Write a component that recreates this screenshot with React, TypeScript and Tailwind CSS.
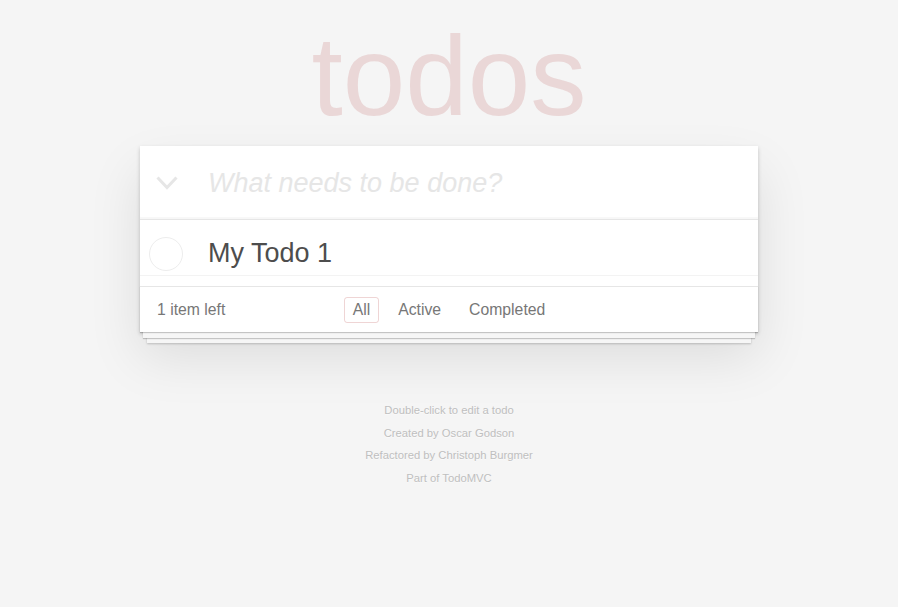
import React from "react";

const filters = ["All", "Active", "Completed"];

const App = () => {
    return (
        <div className="min-h-screen bg-[#f5f5f5] text-[#4d4d4d] font-[family-name:'Liberation_Sans',Arial,sans-serif]">
            <div className="w-[618px] mx-auto">
                {/* Title */}
                <h1 className="pt-[20px] mb-[14px] text-center text-[112.5px] leading-[112px] font-normal text-[rgba(175,47,47,0.15)]">
                    todos
                </h1>

                {/* Card */}
                <section className="bg-white shadow-[0_2px_4px_0_rgba(0,0,0,0.2),0_25px_50px_0_rgba(0,0,0,0.1)]">
                    {/* New todo */}
                    <header className="h-[73px] flex items-center shadow-[inset_0_-2px_1px_rgba(0,0,0,0.03)]">
                        <div className="w-[68px] pl-[16px] flex items-center">
                            <svg width="22" height="14" viewBox="0 0 22 14">
                                <polyline
                                    points="1.5,1.5 11,11.5 20.5,1.5"
                                    fill="none"
                                    stroke="#e6e6e6"
                                    strokeWidth="3"
                                />
                            </svg>
                        </div>
                        <input
                            className="flex-grow min-w-0 bg-transparent outline-none text-[27px] leading-[38px] italic text-[#4d4d4d] placeholder:text-[#e6e6e6] placeholder:italic"
                            placeholder="What needs to be done?"
                        />
                    </header>

                    {/* List */}
                    <div className="border-t border-[#e6e6e6]">
                        <div className="h-[56px] flex items-start pt-[17px] pl-[9px] border-b border-[#f3f3f3]">
                            <div className="w-[34px] h-[34px] rounded-full border border-[#ededed] flex-shrink-0" />
                            <span className="ml-[25px] text-[27px] leading-[32px] text-[#4d4d4d]">
                                My Todo 1
                            </span>
                        </div>
                        <div className="h-[10px]" />
                    </div>

                    {/* Footer */}
                    <footer className="relative h-[46px] border-t border-[#e6e6e6] px-[17px] grid grid-cols-[1fr_auto_1fr] items-center text-[15.75px] text-[#777]">
                        <div className="absolute inset-x-0 bottom-0 h-[46px] shadow-[0_1px_1px_rgba(0,0,0,0.2),0_9px_0_-3px_#f6f6f6,0_10px_1px_-3px_rgba(0,0,0,0.2),0_18px_0_-7px_#f6f6f6,0_19px_2px_-7px_rgba(0,0,0,0.2)]" />
                        <span className="relative">1 item left</span>
                        <div className="relative flex items-center gap-[10px]">
                            {filters.map((f, i) => (
                                <span
                                    key={f}
                                    className={
                                        i === 0
                                            ? "h-[26px] px-[8px] flex items-center rounded-[3px] border border-[rgba(175,47,47,0.2)]"
                                            : "h-[26px] px-[8px] flex items-center rounded-[3px] border border-transparent"
                                    }
                                >
                                    {f}
                                </span>
                            ))}
                        </div>
                        <span />
                    </footer>
                </section>

                {/* Info */}
                <div className="mt-[73px] flex flex-col items-center gap-[11.5px] text-[11.25px] leading-[11px] text-[#bfbfbf] [text-shadow:0_1px_0_rgba(255,255,255,0.5)]">
                    <p>Double-click to edit a todo</p>
                    <p>Created by Oscar Godson</p>
                    <p>Refactored by Christoph Burgmer</p>
                    <p>Part of TodoMVC</p>
                </div>
            </div>
        </div>
    );
};

export default App;
